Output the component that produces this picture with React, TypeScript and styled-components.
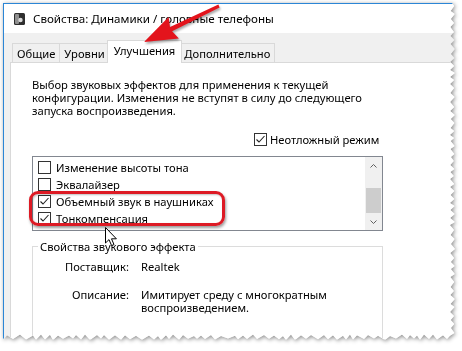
import React from "react";
import styled, { createGlobalStyle } from "styled-components";

const GlobalStyle = createGlobalStyle`
  html, body {
    margin: 0;
    background: #fff;
  }
  body {
    font-family: "Noto Sans", "Open Sans", sans-serif;
    font-size: 11.2px;
    color: #000;
  }
`;

// torn paper edge on the right and bottom of the screenshot
const tornEdge = (() => {
  let s = 11;
  const rnd = () => {
    s = (s * 9301 + 49297) % 233280;
    return s / 233280;
  };
  const W = 452;
  const H = 337;
  const pts: string[] = ["0px 0px", `${W - 3}px 0px`];
  let i = 0;
  for (let y = 3; y < H - 4; y += 3 + Math.round(rnd() * 2)) {
    const x = W - (i++ % 2 ? 4 : 0) - rnd() * 1.2;
    pts.push(`${x.toFixed(1)}px ${y}px`);
  }
  for (let x = W - 5; x > 0; x -= 3 + Math.round(rnd() * 4)) {
    const y = H - (i++ % 2 ? 4 : 0) - rnd() * 1.5;
    pts.push(`${x}px ${y.toFixed(1)}px`);
  }
  pts.push(`0px ${H - 2}px`);
  return `polygon(${pts.join(",")})`;
})();

const Page = styled.div`
  position: relative;
  width: 462px;
  height: 351px;
  padding: 3px 0 0 3px;
  box-sizing: border-box;
  overflow: hidden;
`;

const Shadow = styled.div`
  filter: drop-shadow(1px 1px 2px rgba(0, 0, 0, 0.45));
`;

const Window = styled.div`
  width: 452px;
  height: 337px;
  box-sizing: border-box;
  display: flex;
  flex-direction: column;
  background: #f0f0f0;
  border-left: 1px solid #2b86d6;
  border-top: 1px solid #2b86d6;
  clip-path: ${tornEdge};
`;

const TitleBar = styled.div`
  height: 29px;
  flex: none;
  background: #fff;
  display: flex;
  align-items: center;
  gap: 8px;
  padding-left: 10px;
  font-size: 11.6px;
`;

const Body = styled.div`
  flex: 1;
  display: flex;
  flex-direction: column;
  padding-left: 6px;
  min-height: 0;
`;

const TabRow = styled.div`
  height: 29px;
  flex: none;
  display: flex;
  align-items: flex-end;
  padding-left: 2px;
  position: relative;
  z-index: 1;
`;

const Tab = styled.div<{ $active?: boolean }>`
  box-sizing: border-box;
  height: ${(p) => (p.$active ? 23 : 19)}px;
  margin: ${(p) => (p.$active ? "0 -2px -1px -3px" : "0 0 0 -1px")};
  padding: ${(p) => (p.$active ? "0 6px 3px" : "0 4px")};
  border: 1px solid #d9d9d9;
  border-bottom: none;
  background: ${(p) => (p.$active ? "#fff" : "#f0f0f0")};
  display: flex;
  align-items: center;
  line-height: 15px;
  position: relative;
  z-index: ${(p) => (p.$active ? 2 : 0)};
  &:first-child {
    margin-left: 0;
  }
`;

const Panel = styled.div`
  flex: 1;
  background: #fff;
  border: 1px solid #d9d9d9;
  border-right: none;
  padding-left: 21px;
  display: flex;
  flex-direction: column;
  min-height: 0;
`;

const Description = styled.div`
  margin-top: 15px;
  line-height: 13px;
`;

const UrgentRow = styled.label`
  margin-top: 15px;
  padding-left: 222px;
  display: flex;
  align-items: center;
  gap: 3px;
  height: 15px;
`;

const Box = styled.span`
  width: 13px;
  height: 13px;
  box-sizing: border-box;
  border: 1px solid #333;
  background: #fff;
  flex: none;
  display: flex;
`;

const ListBox = styled.div`
  margin-top: 9px;
  width: 351px;
  height: 75px;
  flex: none;
  box-sizing: border-box;
  border: 1px solid #828790;
  display: flex;
`;

const List = styled.div`
  flex: 1;
  padding-top: 2px;
`;

const Row = styled.div`
  height: 17px;
  display: flex;
  align-items: center;
  gap: 5px;
  padding-left: 5px;
`;

const ScrollBar = styled.div`
  width: 17px;
  background: #f0f0f0;
  display: flex;
  flex-direction: column;
`;

const ScrollBtn = styled.div`
  height: 17px;
  display: flex;
  align-items: center;
  justify-content: center;
  flex: none;
`;

const Track = styled.div`
  flex: 1;
  display: flex;
  flex-direction: column;
  justify-content: flex-end;
  align-items: center;
`;

const Thumb = styled.div`
  width: 15px;
  height: 25px;
  background: #cdcdcd;
`;

const Group = styled.fieldset`
  margin: 8px 0 0;
  width: 351px;
  height: 110px;
  flex: none;
  box-sizing: border-box;
  border: 1px solid #dcdcdc;
  padding: 0 0 0 5px;
`;

const Legend = styled.legend`
  padding: 0 2px;
  line-height: 15px;
`;

const Props = styled.div`
  margin-top: 6px;
  display: grid;
  grid-template-columns: 91px 1fr;
  column-gap: 12px;
  row-gap: 15px;
  line-height: 13px;
`;

const PropName = styled.div`
  text-align: right;
`;

const Highlight = styled.div`
  position: absolute;
  left: 29px;
  top: 191px;
  width: 196px;
  height: 35px;
  box-sizing: border-box;
  border: 3px solid #dd1a24;
  border-radius: 9px;
  box-shadow: 1px 2px 3px rgba(0, 0, 0, 0.4),
    inset 1px 1px 2px rgba(0, 0, 0, 0.25);
`;

const Overlay = styled.svg`
  position: absolute;
  pointer-events: none;
  overflow: visible;
`;

const Check = ({ checked }: { checked?: boolean }) => (
  <Box>
    {checked && (
      <svg width="11" height="11" viewBox="0 0 11 11">
        <polyline
          points="1.5,5.5 4,8 9.5,2"
          fill="none"
          stroke="#222"
          strokeWidth="1.1"
        />
      </svg>
    )}
  </Box>
);

const Chevron = ({ up }: { up?: boolean }) => (
  <svg width="7" height="4" viewBox="0 0 7 4">
    <polyline
      points={up ? "0.5,3.5 3.5,0.5 6.5,3.5" : "0.5,0.5 3.5,3.5 6.5,0.5"}
      fill="none"
      stroke="#606060"
      strokeWidth="1"
    />
  </svg>
);

const SpeakerIcon = () => (
  <svg width="11" height="12" viewBox="0 0 11 12">
    <rect x="0" y="0" width="11" height="12" rx="1.5" fill="#2e2e2e" />
    <rect x="1" y="1" width="4" height="10" rx="1" fill="#8f8f8f" />
    <circle cx="6.5" cy="7" r="2.2" fill="#d8d8d8" />
  </svg>
);

// red annotation arrow: tip near the "Улучшения" tab
const arrow = (() => {
  const tip = [10, 42];
  const tail = [85, 6];
  const dx = tail[0] - tip[0];
  const dy = tail[1] - tip[1];
  const len = Math.hypot(dx, dy);
  const ux = dx / len;
  const uy = dy / len;
  const nx = -uy;
  const ny = ux;
  const headLen = 30;
  const headHalf = 12;
  const bx = tip[0] + ux * headLen;
  const by = tip[1] + uy * headLen;
  const p = (x: number, y: number) => `${x.toFixed(1)},${y.toFixed(1)}`;
  return [
    p(tip[0], tip[1]),
    p(bx + nx * headHalf + ux * 3, by + ny * headHalf + uy * 3),
    p(bx + nx * 2.4, by + ny * 2.4),
    p(tail[0] + nx * 1.5, tail[1] + ny * 1.5),
    p(tail[0] - nx * 1.5, tail[1] - ny * 1.5),
    p(bx - nx * 2.4, by - ny * 2.4),
    p(bx - nx * headHalf + ux * 3, by - ny * headHalf + uy * 3),
  ].join(" ");
})();

const items = [
  { label: "Изменение высоты тона", checked: false },
  { label: "Эквалайзер", checked: false },
  { label: "Объемный звук в наушниках", checked: true },
  { label: "Тонкомпенсация", checked: true },
];

export default function App() {
  return (
    <Page>
      <GlobalStyle />
      <Shadow>
        <Window>
          <TitleBar>
            <SpeakerIcon />
            <span>Свойства: Динамики / головные телефоны</span>
          </TitleBar>
          <Body>
            <TabRow>
              <Tab>Общие</Tab>
              <Tab>Уровни</Tab>
              <Tab $active>Улучшения</Tab>
              <Tab>Дополнительно</Tab>
            </TabRow>
            <Panel>
              <Description>
                Выбор звуковых эффектов для применения к текущей
                <br />
                конфигурации. Изменения не вступят в силу до следующего
                <br />
                запуска воспроизведения.
              </Description>
              <UrgentRow>
                <Check checked />
                Неотложный режим
              </UrgentRow>
              <ListBox>
                <List>
                  {items.map((it) => (
                    <Row key={it.label}>
                      <Check checked={it.checked} />
                      {it.label}
                    </Row>
                  ))}
                </List>
                <ScrollBar>
                  <ScrollBtn>
                    <Chevron up />
                  </ScrollBtn>
                  <Track>
                    <Thumb />
                  </Track>
                  <ScrollBtn>
                    <Chevron />
                  </ScrollBtn>
                </ScrollBar>
              </ListBox>
              <Group>
                <Legend>Свойства звукового эффекта</Legend>
                <Props>
                  <PropName>Поставщик:</PropName>
                  <div>Realtek</div>
                  <PropName>Описание:</PropName>
                  <div>
                    Имитирует среду с многократным
                    <br />
                    воспроизведением.
                  </div>
                </Props>
              </Group>
            </Panel>
          </Body>
        </Window>
      </Shadow>
      <Highlight />
      <Overlay
        width="96"
        height="50"
        viewBox="0 0 96 50"
        style={{ left: 134, top: 0, filter: "drop-shadow(1px 2px 1px rgba(0,0,0,0.35))" }}
      >
        <polygon points={arrow} fill="#e3141c" />
      </Overlay>
      <Overlay
        width="14"
        height="21"
        viewBox="0 0 14 21"
        style={{ left: 105, top: 227 }}
      >
        <path
          d="M0.5 0.5 L0.5 16 L4 12.6 L6.6 18.6 L9 17.6 L6.5 11.8 L11.4 11.8 Z"
          fill="#fff"
          stroke="#000"
          strokeWidth="1"
          strokeLinejoin="round"
        />
      </Overlay>
    </Page>
  );
}
